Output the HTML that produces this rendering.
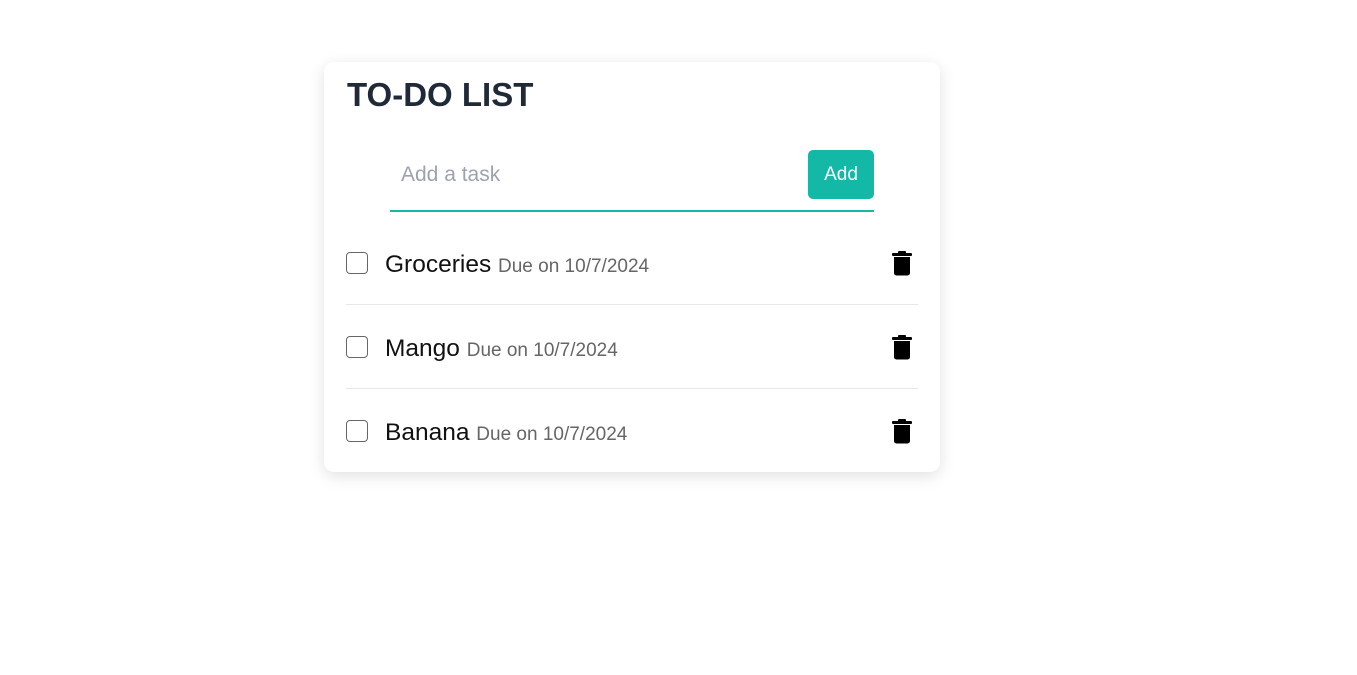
<!DOCTYPE html>
<html><head><style>
body{margin:0;background:#fff;font-family:"Liberation Sans",Arial,sans-serif;}
.card{position:absolute;left:324px;top:62px;width:616px;height:410px;background:#fff;border-radius:10px;box-shadow:0 4px 16px rgba(0,0,0,0.12);}
h1{position:absolute;left:23px;top:14px;margin:0;font-size:33px;font-weight:bold;color:#1f2937;}
.inp{position:absolute;left:66px;top:88px;width:484px;height:60px;border-bottom:2px solid #14b8a6;}
.inp .ph{position:absolute;left:11px;top:13px;font-size:21px;color:#9ca3af;}
.btn{position:absolute;left:484px;top:88px;width:66px;height:49px;background:#14b8a6;border-radius:5px;color:#fff;font-size:19px;text-align:center;line-height:49px;}
.row{position:absolute;left:22px;width:572px;height:83px;}
.row.b{border-bottom:1px solid #e5e7eb;}
.cb{position:absolute;left:0;top:31px;width:20px;height:20px;border:1px solid #666;border-radius:4px;}
.t{position:absolute;left:39px;top:30px;font-size:24.5px;color:#111;white-space:nowrap;}
.t span{font-size:19px;color:#666;}
.tr{position:absolute;left:545px;top:29px;}
</style></head><body>
<div class="card">
<h1>TO-DO LIST</h1>
<div class="inp"><div class="ph">Add a task</div></div>
<div class="btn">Add</div>
<div class="row b" style="top:159px"><div class="cb"></div><div class="t">Groceries <span>Due on 10/7/2024</span></div>
<svg class="tr" width="22" height="26" viewBox="0 0 22 26"><rect x="1" y="3" width="20" height="3" rx="1"/><rect x="7" y="1" width="8" height="3" rx="1"/><path d="M3 7h16v16a2.5 2.5 0 0 1-2.5 2.5h-11A2.5 2.5 0 0 1 3 23z"/></svg></div>
<div class="row b" style="top:243px"><div class="cb"></div><div class="t">Mango <span>Due on 10/7/2024</span></div>
<svg class="tr" width="22" height="26" viewBox="0 0 22 26"><rect x="1" y="3" width="20" height="3" rx="1"/><rect x="7" y="1" width="8" height="3" rx="1"/><path d="M3 7h16v16a2.5 2.5 0 0 1-2.5 2.5h-11A2.5 2.5 0 0 1 3 23z"/></svg></div>
<div class="row" style="top:327px"><div class="cb"></div><div class="t">Banana <span>Due on 10/7/2024</span></div>
<svg class="tr" width="22" height="26" viewBox="0 0 22 26"><rect x="1" y="3" width="20" height="3" rx="1"/><rect x="7" y="1" width="8" height="3" rx="1"/><path d="M3 7h16v16a2.5 2.5 0 0 1-2.5 2.5h-11A2.5 2.5 0 0 1 3 23z"/></svg></div>
</div>
</body></html>
